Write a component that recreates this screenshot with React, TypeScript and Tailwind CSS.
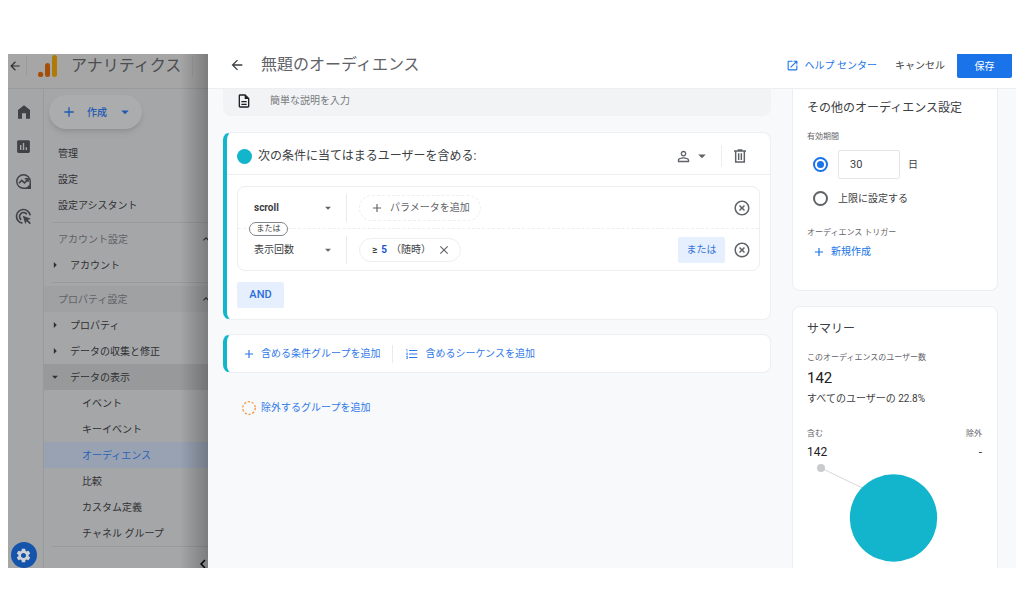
import type { ReactNode } from "react";
import {
  MdAdd,
  MdArrowBack,
  MdArrowDropDown,
  MdArrowRight,
  MdChevronLeft,
  MdClose,
  MdFormatListNumbered,
  MdHighlightOff,
  MdInsertChart,
  MdKeyboardArrowUp,
  MdOpenInNew,
  MdOutlineDescription,
  MdPersonOutline,
  MdSettings,
} from "react-icons/md";

function AnalyticsLogo() {
  return (
    <svg viewBox="0 0 20 22" className="h-[22px] w-5 shrink-0">
      <rect x="14" y="0" width="5" height="22" rx="2.5" fill="#b07a08" />
      <rect x="7" y="8" width="5" height="14" rx="2.5" fill="#a4500b" />
      <circle cx="2.6" cy="19.4" r="2.6" fill="#a4500b" />
    </svg>
  );
}

function HomeIcon() {
  return (
    <svg viewBox="0 0 24 24" fill="currentColor" className="size-4">
      <path d="M3 22V9l9-7 9 7v13h-6v-8H9v8z" />
    </svg>
  );
}

function ExploreIcon() {
  return (
    <svg viewBox="0 0 24 24" fill="none" stroke="currentColor" strokeWidth="2" className="size-[17px]">
      <path d="M21.5 12a9.5 9.5 0 1 0-9.5 9.5h9.5z" />
      <path d="M21.5 17v4.500h-5z" fill="currentColor" />
      <path d="M5.500 14.500l4-4 4 3.500 4.500-5" strokeWidth="2.200" />
      <path d="M13.800 8h4.700v4.700" strokeWidth="2" />
    </svg>
  );
}

function AdsIcon() {
  return (
    <svg viewBox="0 0 24 24" fill="none" stroke="currentColor" strokeWidth="2.300" className="size-[17px]">
      <path d="M10.500 21.400A9.700 9.700 0 1 1 21.400 10.500" />
      <path d="M8.800 16.600A5.600 5.600 0 1 1 16.600 8.800" />
      <path d="M11 11l11.500 4-4.300 2 4.300 4.300-1.700 1.700-4.300-4.300-2 3.800z" fill="currentColor" stroke="none" />
    </svg>
  );
}

function TrashIcon() {
  return (
    <svg viewBox="0 0 24 24" fill="none" stroke="currentColor" strokeWidth="2.200" className="size-4">
      <path d="M3 4.500h18M8.500 3h7M5.500 5v16h13V5M10 8v10M14 8v10" />
    </svg>
  );
}

function NavRow({ children, className = "" }: { children: ReactNode; className?: string }) {
  return (
    <a href="#" className={`flex h-[26px] items-center ${className}`}>
      {children}
    </a>
  );
}

function Divider() {
  return (
    <div className="flex h-2 items-center pl-2">
      <div className="h-px w-full bg-[#999a9c]" />
    </div>
  );
}

function Section({ label, className = "" }: { label: string; className?: string }) {
  return (
    <button type="button" className={`flex h-[26px] w-full items-center justify-between pl-[14px] text-[#5f6164] ${className}`}>
      {label}
      <MdKeyboardArrowUp className="size-3 text-[#2c2d2f]" />
    </button>
  );
}

function Sidebar() {
  const children = ["イベント", "キーイベント", "オーディエンス", "比較", "カスタム定義", "チャネル グループ"];

  return (
    <aside className="relative flex w-[200px] shrink-0 flex-col overflow-hidden bg-[#a5a6a8] text-[#2f3033]">
      <header className="flex h-[35px] shrink-0 items-center border-b border-[#999a9c] bg-[#a6a6a6] pb-[10px]">
        <button type="button" aria-label="戻る" className="w-[18px]">
          <MdArrowBack className="size-[14px]" />
        </button>
        <div className="mr-[11px] h-5 w-px bg-[#9a9b9c]" />
        <AnalyticsLogo />
        <span className="ml-[13px] shrink-0 text-base text-[#4b4d50]">アナリティクス</span>
        <div className="ml-[11px] h-5 w-px shrink-0 bg-[#9a9b9c]" />
      </header>

      <div className="flex min-h-0 flex-1">
        <div className="flex w-9 shrink-0 flex-col items-center border-r border-[#999a9c] pr-1 text-[#3f4144]">
          <nav className="flex flex-col items-center gap-[18px] pt-[15px]">
            <a href="#" aria-label="ホーム"><HomeIcon /></a>
            <a href="#" aria-label="レポート"><MdInsertChart className="size-[17px]" /></a>
            <a href="#" aria-label="探索"><ExploreIcon /></a>
            <a href="#" aria-label="広告"><AdsIcon /></a>
          </nav>
          <a href="#" aria-label="管理" className="mt-auto flex size-[26px] items-center justify-center rounded-full bg-[#1554ab] text-[#d0d2d6]">
            <MdSettings className="size-[17px]" />
          </a>
        </div>

        <div className="w-[168px] shrink-0 text-[10px]">
          <button
            type="button"
            className="mt-[6px] mb-[11px] ml-[5px] flex h-[34px] w-[93px] items-center rounded-full bg-[#abacad] pl-3 font-medium text-[#1f59b3] shadow-md"
          >
            <MdAdd className="size-4" />
            <span className="ml-[10px]">作成</span>
            <MdArrowDropDown className="ml-[9px] size-[18px]" />
          </button>

          <nav>
            <NavRow className="pl-[14px]">管理</NavRow>
            <NavRow className="pl-[14px]">設定</NavRow>
            <NavRow className="pl-[14px]">設定アシスタント</NavRow>
            <Divider />
            <Section label="アカウント設定" />
            <NavRow className="gap-2 pl-1"><MdArrowRight className="size-[14px]" />アカウント</NavRow>
            <Divider />
            <Section label="プロパティ設定" className="bg-[#a0a1a3]" />
            <NavRow className="gap-2 pl-1"><MdArrowRight className="size-[14px]" />プロパティ</NavRow>
            <NavRow className="gap-2 pl-1"><MdArrowRight className="size-[14px]" />データの収集と修正</NavRow>
            <NavRow className="gap-2 bg-[#98999b] pl-1"><MdArrowDropDown className="size-[14px]" />データの表示</NavRow>
            {children.map((name) => (
              <NavRow
                key={name}
                className={name === "オーディエンス" ? "bg-[#98a2b3] pl-[38px] text-[#2b62b8]" : "pl-[38px]"}
              >
                {name}
              </NavRow>
            ))}
          </nav>
          <div className="ml-2 h-px bg-[#999a9c]" />
          <button type="button" aria-label="折りたたむ" className="mt-2 ml-[150px] block text-black">
            <MdChevronLeft className="size-[18px]" />
          </button>
        </div>
      </div>

      <div className="pointer-events-none absolute inset-y-0 right-0 w-7 bg-gradient-to-r from-transparent to-black/25" />
    </aside>
  );
}

function Condition({ value, className = "", children }: { value: string; className?: string; children: ReactNode }) {
  return (
    <div className="flex h-[41px] items-center pr-2 pl-4">
      <div className="relative flex w-[93px] items-center border-r border-[#e8eaed]">
        <select
          aria-label="条件"
          defaultValue={value}
          className={`h-7 w-full appearance-none bg-transparent text-[10px] text-[#3c4043] ${className}`}
        >
          <option>{value}</option>
        </select>
        <MdArrowDropDown className="pointer-events-none absolute right-[11px] size-[14px] text-[#5f6368]" />
      </div>
      {children}
      <button type="button" aria-label="削除" className="text-[#5f6368]">
        <MdHighlightOff className="size-[18px]" />
      </button>
    </div>
  );
}

function ConditionGroup() {
  return (
    <section className="mt-4 rounded-lg border border-l-4 border-[#eceef0] border-l-[#12b5cb] bg-white">
      <div className="flex h-[42px] items-center border-b border-[#eceef0] pt-[9px] pr-[22px] pb-1 pl-[10px]">
        <span className="size-[15px] rounded-full bg-[#12b5cb]" />
        <h2 className="ml-[6px] text-xs text-[#3c4043]">次の条件に当てはまるユーザーを含める:</h2>
        <button type="button" aria-label="スコープ" className="ml-auto flex items-center gap-[1px] text-[#5f6368]">
          <MdPersonOutline className="size-[17px]" />
          <MdArrowDropDown className="size-[18px]" />
        </button>
        <div className="mx-[10px] h-[22px] w-px bg-[#eceef0]" />
        <button type="button" aria-label="グループを削除" className="text-[#5f6368]">
          <TrashIcon />
        </button>
      </div>

      <div className="p-[10px] pt-[11px] pb-[11px]">
        <div className="rounded-lg border border-[#eceef0]">
          <Condition value="scroll" className="font-bold">
            <button type="button" className="mr-auto ml-3 flex h-[26px] items-center gap-[6px] rounded-full border border-dashed border-[#eceef0] px-[10px] text-[10px] text-[#5f6368]">
              <MdAdd className="size-[14px]" />
              パラメータを追加
            </button>
          </Condition>
          <div className="relative border-t border-dashed border-[#eceef0]">
            <span className="absolute -top-[7px] left-[11px] flex h-[14px] w-[39px] items-center justify-center rounded-full border border-[#80868b] bg-white text-[8px] text-[#3c4043]">
              または
            </span>
            <Condition value="表示回数">
              <div className="mr-auto ml-3 flex h-6 items-center rounded-full border border-[#eceef0] pr-[9px] pl-3 text-[10px] text-[#3c4043]">
                <b>≥</b>
                <b className="ml-1 text-[#1a56cf]">5</b>
                <span className="ml-1">（随時）</span>
                <button type="button" aria-label="クリア" className="ml-[6px] text-[#5f6368]">
                  <MdClose className="size-[14px]" />
                </button>
              </div>
              <button type="button" className="mr-2 h-[26px] w-[47px] rounded-xs bg-[#e6effd] text-[10px] text-[#3273dc]">
                または
              </button>
            </Condition>
          </div>
        </div>
        <button type="button" className="mt-[11px] h-[26px] w-[47px] rounded-xs bg-[#e6effd] text-[11px] font-medium text-[#2a6ddb]">
          AND
        </button>
      </div>
    </section>
  );
}

function Builder() {
  return (
    <div className="min-w-0 flex-1 text-[10px]">
      <label className="flex h-[27px] items-center rounded-b-lg bg-[#f1f3f4] pb-1 pl-[13px]">
        <MdOutlineDescription className="size-4 text-[#202124]" />
        <input
          aria-label="説明"
          placeholder="簡単な説明を入力"
          className="ml-[18px] flex-1 bg-transparent outline-none placeholder:text-[#767a7f]"
        />
      </label>

      <ConditionGroup />

      <section className="mt-[14px] flex h-[39px] items-center rounded-lg border border-l-4 border-[#eceef0] border-l-[#12b5cb] bg-white pl-[15px] text-[#2f78ea]">
        <button type="button" className="flex items-center gap-[5px]">
          <MdAdd className="size-[14px]" />
          含める条件グループを追加
        </button>
        <div className="mx-3 h-[18px] w-px bg-[#e8eaed]" />
        <button type="button" className="flex items-center gap-[6px]">
          <MdFormatListNumbered className="size-[14px]" />
          含めるシーケンスを追加
        </button>
      </section>

      <button type="button" className="mt-[27px] ml-[19px] flex items-center gap-[5px] text-[#2f78ea]">
        <svg viewBox="0 0 14 14" className="size-[14px]">
          <circle cx="7" cy="7" r="6.300" fill="none" stroke="#f2994a" strokeWidth="1.300" strokeDasharray="2.300 1.650" />
        </svg>
        除外するグループを追加
      </button>
    </div>
  );
}

function Settings() {
  const radio =
    "size-[15px] appearance-none rounded-full border-2 border-[#5f6368] p-[2px] checked:border-[#1a73e8] checked:bg-[#1a73e8] checked:bg-clip-content";

  return (
    <section className="h-[202px] rounded-b-lg border border-t-0 border-[#eceef0] bg-white px-[14px] pt-[10px] text-[10px] text-[#3c4043]">
      <h2 className="text-xs leading-[18px]">その他のオーディエンス設定</h2>
      <p className="mt-[14px] text-[8px] leading-3 text-[#5f6368]">有効期間</p>
      <div className="mt-[7px] flex h-[29px] items-center pl-[6px]">
        <input type="radio" name="duration" aria-label="日数を指定" defaultChecked className={radio} />
        <input
          aria-label="日数"
          defaultValue="30"
          className="mr-2 ml-[10px] h-[29px] w-[62px] rounded-xs border border-[#e4e6e9] pl-[11px] text-[11px]"
        />
        日
      </div>
      <label className="mt-3 flex h-[14px] items-center gap-[10px] pl-[6px]">
        <input type="radio" name="duration" className={radio} />
        上限に設定する
      </label>
      <p className="mt-[22px] text-[8px] leading-3 text-[#5f6368]">オーディエンス トリガー</p>
      <button type="button" className="mt-[5px] flex items-center gap-[5px] pl-[5px] text-[#1a73e8]">
        <MdAdd className="size-[14px]" />
        新規作成
      </button>
    </section>
  );
}

function Summary() {
  return (
    <section className="mt-[15px] rounded-t-lg border border-[#eceef0] bg-white px-[14px] pt-[13px] text-[#3c4043]">
      <h2 className="text-xs leading-[18px]">サマリー</h2>
      <p className="mt-[14px] text-[8px] leading-3 text-[#5f6368]">このオーディエンスのユーザー数</p>
      <p className="mt-1 text-[15px] leading-5 text-[#202124]">142</p>
      <p className="mt-1 text-[10px] leading-[14px]">すべてのユーザーの 22.8%</p>
      <dl className="mt-[22px] flex justify-between pr-px">
        <div>
          <dt className="text-[8px] leading-3 text-[#5f6368]">含む</dt>
          <dd className="mt-1 text-xs leading-4 text-[#202124]">142</dd>
        </div>
        <div className="text-right">
          <dt className="text-[8px] leading-3 text-[#5f6368]">除外</dt>
          <dd className="mt-1 text-xs leading-4">-</dd>
        </div>
      </dl>
      <svg viewBox="0 0 176 110" className="mt-[3px] w-full">
        <path d="M14 5l60 29" stroke="#d6d8da" />
        <circle cx="14" cy="5" r="4" fill="#cacbcc" />
        <circle cx="86.500" cy="55" r="43.700" fill="#12b5cb" />
      </svg>
    </section>
  );
}

export default function App() {
  return (
    <div className="flex h-screen bg-white px-2 pt-[54px] pb-[46px] font-['Roboto','Noto_Sans_CJK_JP',sans-serif]">
      <Sidebar />

      <main className="flex min-w-0 flex-1 flex-col overflow-hidden bg-[#f8f9fb]">
        <header className="flex h-[35px] shrink-0 items-center border-b border-[#eceef0] bg-white pr-1 pb-3 pl-[21px] text-[10px]">
          <button type="button" aria-label="戻る" className="text-[#3c4043]">
            <MdArrowBack className="size-4" />
          </button>
          <input
            aria-label="オーディエンス名"
            defaultValue="無題のオーディエンス"
            className="ml-4 h-6 min-w-0 flex-1 text-base text-[#5f6368] outline-none"
          />
          <a href="#" className="flex items-center gap-[6px] text-[#1a73e8]">
            <MdOpenInNew className="size-[13px]" />
            ヘルプ センター
          </a>
          <button type="button" className="mr-3 ml-[18px] text-[#3c4043]">キャンセル</button>
          <button type="button" className="h-6 w-[55px] self-start rounded-b-xs bg-[#1a73e8] text-white">
            保存
          </button>
        </header>

        <div className="flex min-h-0 flex-1 gap-[21px] pr-[18px] pl-[15px]">
          <Builder />
          <div className="w-[206px] shrink-0">
            <Settings />
            <Summary />
          </div>
        </div>
      </main>
    </div>
  );
}
